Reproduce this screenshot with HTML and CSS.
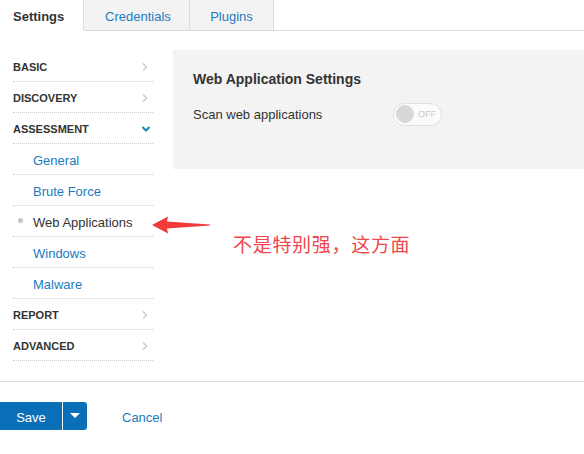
FILE: index.html
```html
<!DOCTYPE html>
<html>
<head>
<meta charset="utf-8">
<link rel="stylesheet" href="styles.css">
</head>
<body>
<div class="tabs">
  <div class="tab active">Settings</div>
  <div class="tab cred">Credentials</div>
  <div class="tab plug">Plugins</div>
</div>
<div class="main">
  <ul class="side">
    <li class="head"><span>BASIC</span><svg class="chev" viewBox="0 0 8 10"><path d="M2 1.5 L5.5 5 L2 8.5" /></svg></li>
    <li class="head"><span>DISCOVERY</span><svg class="chev" viewBox="0 0 8 10"><path d="M2 1.5 L5.5 5 L2 8.5" /></svg></li>
    <li class="head"><span>ASSESSMENT</span><svg class="chev down" viewBox="0 0 10 8"><path d="M1.5 2 L5 5.5 L8.5 2" /></svg></li>
    <li class="sub">General</li>
    <li class="sub">Brute Force</li>
    <li class="sub current">Web Applications</li>
    <li class="sub">Windows</li>
    <li class="sub">Malware</li>
    <li class="head"><span>REPORT</span><svg class="chev" viewBox="0 0 8 10"><path d="M2 1.5 L5.5 5 L2 8.5" /></svg></li>
    <li class="head"><span>ADVANCED</span><svg class="chev" viewBox="0 0 8 10"><path d="M2 1.5 L5.5 5 L2 8.5" /></svg></li>
  </ul>
  <div class="content">
    <div class="panel">
      <h2 class="title">Web Application Settings</h2>
      <div class="row">
        <span class="label">Scan web applications</span>
        <span class="toggle"><span class="knob"></span><span class="off">OFF</span></span>
      </div>
    </div>
    <svg class="arrow" viewBox="0 0 60 20" width="60" height="20"><path d="M0 10 L16 1.5 L15 6.5 L58 9.4 L58 10.6 L15 13.5 L16 18.5 Z" /></svg>
    <div class="note">不是特别强，这方面</div>
  </div>
</div>
<div class="footer">
  <div class="split">
    <button class="save">Save</button>
    <button class="drop"><svg viewBox="0 0 10 6" width="10" height="6"><path d="M0 0 L10 0 L5 5 Z"/></svg></button>
  </div>
  <a class="cancel">Cancel</a>
</div>
</body>
</html>
```
FILE: styles.css
```css
* { box-sizing: border-box; }
html, body { margin: 0; padding: 0; background: #fff; }
body {
  font-family: "Liberation Sans", Arial, sans-serif;
  font-size: 13px;
  color: #333;
  width: 584px;
  height: 454px;
  overflow: hidden;
}
.tabs {
  display: flex;
  height: 31px;
  border-bottom: 1px solid #dcdcdc;
}
.tab {
  height: 31px;
  line-height: 33px;
  text-align: center;
  color: #1b7bbf;
  background: #f3f3f3;
  border-right: 1px solid #dcdcdc;
  border-bottom: 1px solid #dcdcdc;
}
.tab.cred { width: 106px; padding-left: 3px; }
.tab.plug { width: 84px; }
.tab.active {
  width: 84px;
  text-align: left;
  background: #fff;
  color: #333;
  font-weight: bold;
  padding-left: 13px;
  border-bottom-color: #fff;
}
.main {
  display: flex;
  padding-top: 19px;
  height: 350px;
}
.side {
  list-style: none;
  margin: 0;
  padding: 0;
  margin-left: 13px;
  width: 140px;
  flex: none;
  margin-top: 1px;
}
.side li {
  height: 31px;
  border-bottom: 1px dotted #cfcfcf;
  display: flex;
  align-items: center;
  position: relative;
}
.head {
  font-size: 11px;
  font-weight: bold;
  color: #333;
  justify-content: space-between;
  padding-top: 2px;
}
.chev {
  width: 8px;
  height: 10px;
  margin-right: 4px;
  fill: none;
  stroke: #c8c8c8;
  stroke-width: 1.3;
}
.chev.down {
  width: 10px;
  height: 8px;
  stroke: #1a8aa8;
  stroke-width: 2;
  margin-right: 2px;
}
.sub {
  padding-left: 20px;
  color: #1b7bbf;
  padding-top: 2px;
}
.sub.current { color: #333; }
.sub.current::before {
  content: "";
  position: absolute;
  left: 5px;
  top: 12px;
  width: 5px;
  height: 5px;
  border-radius: 50%;
  background: #c4c4c4;
}
.content {
  flex: 1;
  margin-left: 20px;
  position: relative;
}
.panel {
  background: #f3f3f3;
  height: 119px;
  padding: 20px 20px;
}
.title {
  margin: 0;
  font-size: 14px;
  font-weight: bold;
  color: #333;
  line-height: 18px;
}
.row {
  display: flex;
  align-items: center;
  margin-top: 14px;
  height: 24px;
}
.label {
  width: 200px;
  color: #333;
}
.toggle {
  width: 49px;
  height: 23px;
  border: 1px solid #e0e0e0;
  border-radius: 12px;
  background: #fbfbfb;
  display: flex;
  align-items: center;
  padding-left: 2px;
}
.knob {
  width: 18px;
  height: 18px;
  border-radius: 50%;
  background: #d8d8d8;
}
.off {
  font-size: 9px;
  color: #c9c9c9;
  margin-left: 4px;
}
.arrow {
  position: absolute;
  left: -21px;
  top: 165px;
  fill: #f23a3a;
}
.note {
  position: absolute;
  left: 60px;
  top: 182px;
  font-family: "Noto Sans CJK SC", sans-serif;
  font-size: 19px;
  line-height: 24px;
  color: #f0464c;
  letter-spacing: 0.7px;
}
.footer {
  border-top: 1px solid #dcdcdc;
  padding-top: 20px;
  display: flex;
  align-items: center;
}
.split { display: flex; }
button {
  font-family: "Liberation Sans", Arial, sans-serif;
  border: none;
  background: #0b6fb8;
  color: #fff;
  font-size: 13px;
  height: 28px;
  padding: 2px 0 0;
}
.save {
  width: 62px;
  border-radius: 0;
  margin-right: 1px;
}
.drop {
  width: 24px;
  border-radius: 0 3px 3px 0;
  display: flex;
  align-items: center;
  justify-content: center;
  padding: 0;
}
.drop svg { fill: #fff; }
.cancel {
  margin-left: 35px;
  color: #1b7bbf;
  padding-top: 2px;
}
```
